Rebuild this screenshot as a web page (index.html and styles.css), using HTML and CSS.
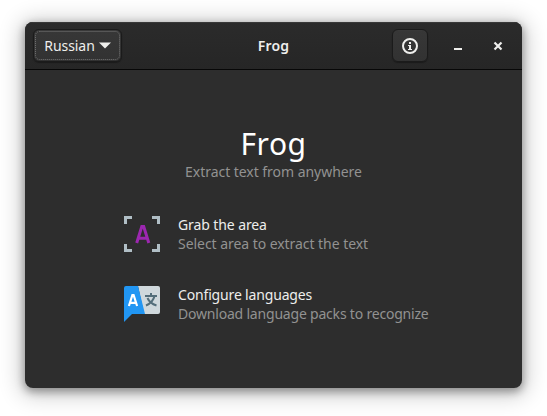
FILE: index.html
```html
<!DOCTYPE html>
<html lang="en">
<head>
<meta charset="utf-8">
<title>Frog</title>
<link rel="stylesheet" href="styles.css">
</head>
<body>
<div class="window">
  <header class="headerbar">
    <button class="button language"><span class="language-label">Russian</span>
      <svg width="12" height="7" viewBox="0 0 12 7"><path d="M0 .5h12L6 6.500z" fill="#eeeeec"/></svg>
      <svg class="focus" width="87" height="31" viewBox="0 0 87 31"><rect x="1.500" y="1.500" width="84" height="28" rx="4" fill="none" stroke="#767676" stroke-dasharray="1 1"/></svg>
    </button>
    <h1 class="title">Frog</h1>
    <div class="controls">
      <button class="button about" aria-label="About">
        <svg width="16" height="16" viewBox="0 0 16 16"><circle cx="8" cy="8" r="7" fill="none" stroke="#eeeeec" stroke-width="2"/><path d="M7 4h2v2H7zM6 7h3v4h1v1H6v-1h1V8H6z" fill="#eeeeec"/></svg>
      </button>
      <button class="control minimize" aria-label="Minimize"><svg width="16" height="16" viewBox="0 0 16 16"><path d="M4 10h8v2H4z" fill="#eeeeec"/></svg></button>
      <button class="control close" aria-label="Close"><svg width="16" height="16" viewBox="0 0 16 16"><path d="M4.500 4.500l7 7M11.500 4.500l-7 7" stroke="#eeeeec" stroke-width="2.200"/></svg></button>
    </div>
  </header>
  <main class="content">
    <h2 class="name">Frog</h2>
    <p class="tagline">Extract text from anywhere</p>
    <div class="actions">
      <div class="action">
        <svg class="icon" width="36" height="36" viewBox="0 0 36 36">
          <path d="M0 0h8v3H3v5H0zM28 0h8v8h-3V3h-5zM0 28h3v5h5v3H0zM33 28h3v8h-8v-3h5z" fill="#b0bec5"/>
          <path d="M12.700 27L17.800 10.500h1.900L24.800 27M14.500 22.200h8.500" fill="none" stroke="#9c27b0" stroke-width="3"/>
        </svg>
        <div class="text"><p class="heading grab">Grab the area</p><p class="detail select">Select area to extract the text</p></div>
      </div>
      <div class="action">
        <svg class="icon" width="36" height="36" viewBox="0 0 36 36">
          <path d="M14 0h20q2 0 2 2v24q0 2-2 2H20z" fill="#cfd8dc"/>
          <path d="M2 0h12l7 28H8l-8 8V2q0-2 2-2z" fill="#2196f3"/>
          <path d="M4.900 20l3.500-11h1.200l3.500 11M6 16.900h6" fill="none" stroke="#fff" stroke-width="2.200"/>
          <path d="M21 10h12M27 7v3M30.500 10c-1 4.500-4 7.500-8.500 9.500M23.500 12c1.500 3.500 4.500 6 9 7.500" fill="none" stroke="#546e7a" stroke-width="2"/>
        </svg>
        <div class="text"><p class="heading configure">Configure languages</p><p class="detail download">Download language packs to recognize</p></div>
      </div>
    </div>
  </main>
</div>
</body>
</html>
```
FILE: styles.css
```css
* { box-sizing: border-box; }
body { margin: 0; padding: 22px 25px 28px; background: #fff; font: 14px/19px "Noto Sans", sans-serif; color: #eeeeec; overflow: hidden; }
h1, h2, p { margin: 0; }
svg { display: block; flex: none; }
button { margin: 0; padding: 0; border: 0; background: none; font: inherit; color: inherit; display: flex; align-items: center; justify-content: center; }
.window { width: 497px; height: 366px; border-radius: 8px; background: #2d2d2d; overflow: hidden; box-shadow: 0 3px 9px 1px rgba(0,0,0,.35), 0 3px 22px 5px rgba(0,0,0,.2); }
.headerbar { height: 48px; padding: 0 8px; display: grid; grid-template-columns: 1fr auto 1fr; align-items: center; background: linear-gradient(#2b2b2b, #262626); border-bottom: 1px solid #070707; box-shadow: inset 0 1px #383838; }
.button { height: 33px; border: 1px solid #1b1b1b; border-radius: 6px; background: linear-gradient(#373737, #323232); box-shadow: inset 0 1px #393939, 0 1px 1px #1b1b1b; }
.language { position: relative; width: 89px; gap: 4px; }
.language-label { width: 51px; white-space: nowrap; letter-spacing: -.05px; }
.focus { position: absolute; inset: 0; }
.title { font-size: 14px; line-height: 19px; font-weight: 600; letter-spacing: .2px; }
.controls { display: flex; justify-content: flex-end; align-items: center; }
.about { width: 36px; }
.control { width: 24px; height: 32px; }
.minimize { margin-left: 18px; }
.close { margin: 0 4px 0 16px; }
.content { display: flex; flex-direction: column; align-items: center; padding-top: 52px; }
.name { color: #fff; font-size: 30px; line-height: 43px; font-weight: 400; letter-spacing: .5px; }
.tagline, .detail { color: #929291; }
.tagline { margin-top: -3px; letter-spacing: -.04px; white-space: nowrap; }
.actions { width: 299px; margin-top: 35px; display: flex; flex-direction: column; gap: 34px; }
.action { height: 36px; display: flex; gap: 18px; white-space: nowrap; }
.text { margin-top: -1px; }
.grab { letter-spacing: -.1px; }
.select { letter-spacing: -.05px; }
.configure { letter-spacing: -.16px; }
.download { letter-spacing: -.2px; }
```
